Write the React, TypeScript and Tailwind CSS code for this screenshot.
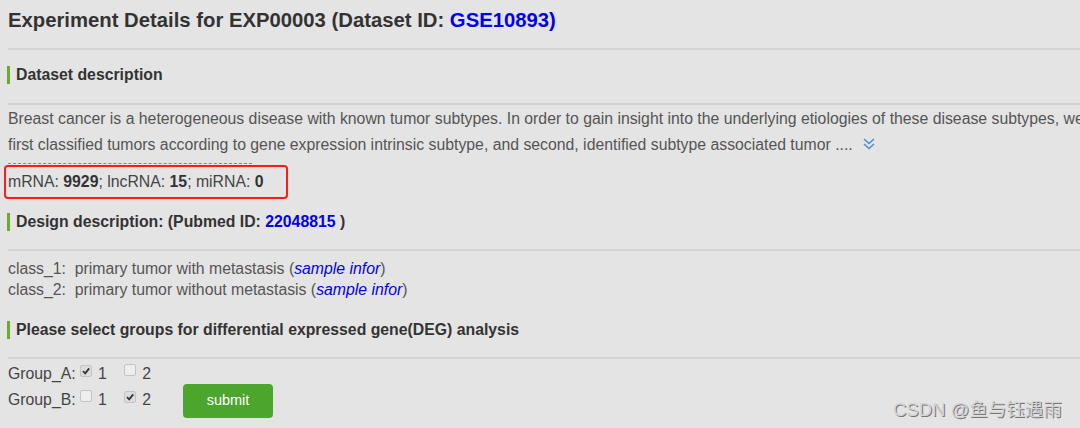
import React from "react";

const font = { fontFamily: '"Liberation Sans", Arial, sans-serif' };

function SectionHead({ children, mt }: { children: React.ReactNode; mt: string }) {
  return (
    <div className={`flex items-center ${mt} h-[20px]`}>
      <div className="w-[3px] h-[18px] bg-[#6aab2a] ml-[7px]" />
      <div className="ml-[6px] text-[15.8px] font-bold text-[#333] whitespace-nowrap">{children}</div>
    </div>
  );
}

function Box({ checked }: { checked?: boolean }) {
  return (
    <span
      className={`inline-flex items-center justify-center w-[12px] h-[12px] border border-[#c4c4c4] rounded-[2px] ${
        checked ? "bg-[#dcdcdc]" : "bg-[#ededed]"
      } mr-[6px] relative top-[-3px]`}
    >
      {checked && (
        <svg width="10" height="10" viewBox="0 0 10 10">
          <path d="M2 5.2 L4.2 7.4 L8.2 2.4" stroke="#333" strokeWidth="1.8" fill="none" />
        </svg>
      )}
    </span>
  );
}

function Rule({ mt }: { mt: string }) {
  return <div className={`ml-[8px] ${mt} h-[2px] bg-[#d4d4d4]`} />;
}

export default function App() {
  return (
    <div className="w-[1080px] h-[428px] bg-[#e4e4e4] overflow-hidden relative text-[#444]" style={font}>
      <div className="pl-[8px] pt-[6px] h-[34px] text-[20.3px] font-bold text-[#333] leading-[28px] whitespace-nowrap">
        Experiment Details for EXP00003 (Dataset ID: <span className="text-[#0000ee]">GSE10893)</span>
      </div>
      <Rule mt="mt-[14px]" />
      <SectionHead mt="mt-[15px]">Dataset description</SectionHead>
      <Rule mt="mt-[18px]" />
      <div className="pl-[8px] mt-[1px] text-[15.8px] leading-[26px] text-[#555] whitespace-nowrap">
        <div>Breast cancer is a heterogeneous disease with known tumor subtypes. In order to gain insight into the underlying etiologies of these disease subtypes, we</div>
        <div className="flex items-center">
          first classified tumors according to gene expression intrinsic subtype, and second, identified subtype associated tumor ....
          <svg className="ml-[9px] mt-[-2px]" width="14" height="14" viewBox="0 0 14 14">
            <path d="M2 2 L7 6.5 L12 2 M2 7 L7 11.5 L12 7" stroke="#4a8fd4" strokeWidth="1.6" fill="none" />
          </svg>
        </div>
      </div>
      <div className="ml-[8px] mt-[5px] w-[244px] border-t border-dashed border-[#888]" />
      <div className="ml-[4px] mt-[1px] w-[284px] h-[34px] border-[2px] border-[#ff1a1a] rounded-[4px] flex items-center pl-[2px] text-[15.8px] text-[#444] whitespace-nowrap">
        mRNA:&nbsp;<b className="text-[#333]">9929</b>; lncRNA:&nbsp;<b className="text-[#333]">15</b>; miRNA:&nbsp;<b className="text-[#333]">0</b>
      </div>
      <SectionHead mt="mt-[13px]">
        <span>
          Design description: (Pubmed ID: <span className="text-[#0000ee]">22048815</span> )
        </span>
      </SectionHead>
      <Rule mt="mt-[17px]" />
      <div className="pl-[8px] mt-[7px] text-[15.8px] leading-[21px] text-[#555] whitespace-nowrap">
        <div>
          class_1:&nbsp; primary tumor with metastasis (<i className="text-[#0000ee]">sample infor</i>)
        </div>
        <div>
          class_2:&nbsp; primary tumor without metastasis (<i className="text-[#0000ee]">sample infor</i>)
        </div>
      </div>
      <SectionHead mt="mt-[20px]">Please select groups for differential expressed gene(DEG) analysis</SectionHead>
      <Rule mt="mt-[17px]" />
      <div className="pl-[8px] mt-[2px] flex items-start text-[15.8px] text-[#444]">
        <div className="leading-[26px] w-[175px] whitespace-nowrap">
          <div>
            Group_A: <Box checked />1 <span className="ml-[13px]"><Box />2</span>
          </div>
          <div>
            Group_B: <Box />1 <span className="ml-[13px]"><Box checked />2</span>
          </div>
        </div>
        <button className="mt-[23px] w-[90px] h-[34px] rounded-[4px] bg-[#4ca62d] text-white text-[14.5px]">
          submit
        </button>
      </div>
      <div
        className="absolute left-[893px] top-[396px] text-[18.5px] text-[#d4d4d4] whitespace-nowrap"
        style={{ fontFamily: '"Liberation Sans", "Noto Sans CJK SC", sans-serif', textShadow: "1px 1px 0 #777" }}
      >
        CSDN @鱼与钰遇雨
      </div>
    </div>
  );
}
